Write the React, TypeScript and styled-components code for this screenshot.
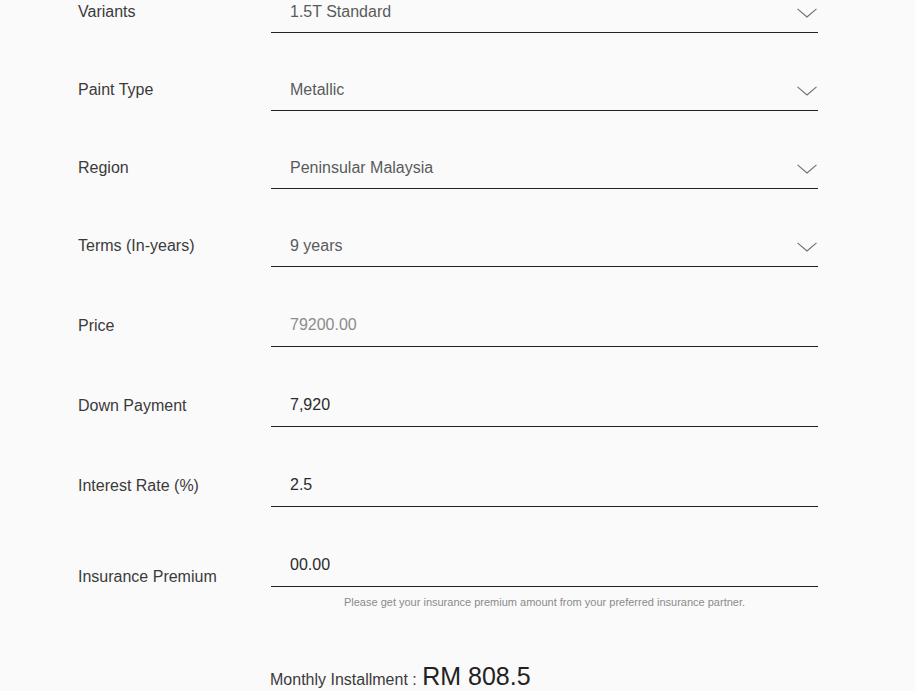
import React from "react";
import styled, { createGlobalStyle } from "styled-components";

const GlobalStyle = createGlobalStyle`
  html, body {
    margin: 0;
    padding: 0;
    background: #fafafa;
    font-family: "Liberation Sans", Arial, Helvetica, sans-serif;
    overflow: hidden;
  }
`;

const selects = [
  { label: "Variants", value: "1.5T Standard" },
  { label: "Paint Type", value: "Metallic" },
  { label: "Region", value: "Peninsular Malaysia" },
  { label: "Terms (In-years)", value: "9 years" },
];

const inputs = [
  { label: "Price", value: "79200.00", disabled: true },
  { label: "Down Payment", value: "7,920" },
  { label: "Interest Rate (%)", value: "2.5" },
];

function Chevron() {
  return (
    <ChevronSvg width="20" height="10" viewBox="0 0 20 10">
      <polyline
        points="0.5,0.8 10,9 19.5,0.8"
        fill="none"
        stroke="#6f6f6f"
        strokeWidth="1.1"
      />
    </ChevronSvg>
  );
}

function App() {
  return (
    <>
      <GlobalStyle />
      <Page>
        <Group $gap={35}>
          {selects.map((s) => (
            <Row key={s.label}>
              <Label>{s.label}</Label>
              <Field>
                <SelectValue>{s.value}</SelectValue>
                <Chevron />
              </Field>
            </Row>
          ))}
        </Group>
        <Group $gap={37}>
          {inputs.map((i) => (
            <Row key={i.label}>
              <Label>{i.label}</Label>
              <Field>
                <TextInput
                  defaultValue={i.value}
                  readOnly
                  $muted={!!i.disabled}
                />
              </Field>
            </Row>
          ))}
          <Row>
            <Label>Insurance Premium</Label>
            <FieldWithHint>
              <Field>
                <TextInput defaultValue="00.00" readOnly $muted={false} />
              </Field>
              <Hint>
                Please get your insurance premium amount from your preferred
                insurance partner.
              </Hint>
            </FieldWithHint>
          </Row>
        </Group>
        <Result>
          <ResultLabel>Monthly Installment : </ResultLabel>
          <ResultValue>RM 808.5</ResultValue>
        </Result>
      </Page>
    </>
  );
}

const Page = styled.div`
  width: 740px;
  padding-left: 78px;
  margin-top: -10px;
  display: flex;
  flex-direction: column;
  gap: 37px;
`;

const Group = styled.div<{ $gap: number }>`
  display: flex;
  flex-direction: column;
  gap: ${(p) => p.$gap}px;
`;

const Row = styled.div`
  display: grid;
  grid-template-columns: 193px 547px;
  align-items: center;
`;

const Label = styled.div`
  font-size: 16px;
  color: #3a3a3a;
  line-height: 20px;
`;

const Field = styled.div`
  position: relative;
  border-bottom: 1px solid #222;
  display: flex;
  align-items: center;
  padding: 1px 1px 0 19px;
  box-sizing: border-box;
  height: 43px;
`;

const FieldWithHint = styled.div`
  display: flex;
  flex-direction: column;
`;

const SelectValue = styled.div`
  flex: 1;
  font-size: 16px;
  color: #5a5a5a;
  line-height: 20px;
`;

const ChevronSvg = styled.svg`
  display: block;
  margin-top: 3px;
`;

const TextInput = styled.input<{ $muted: boolean }>`
  flex: 1;
  border: none;
  outline: none;
  background: transparent;
  padding: 0;
  margin-top: -2px;
  font-family: "Liberation Sans", Arial, Helvetica, sans-serif;
  font-size: 16px;
  line-height: 20px;
  color: ${(p) => (p.$muted ? "#8c8c8c" : "#2a2a2a")};
`;

const Hint = styled.div`
  margin-top: 8px;
  text-align: center;
  font-size: 11px;
  line-height: 14px;
  color: #8a8a8a;
`;

const Result = styled.div`
  margin-top: 16px;
  padding-left: 192px;
  display: flex;
  align-items: baseline;
  color: #3a3a3a;
`;

const ResultLabel = styled.span`
  font-size: 16px;
  white-space: pre;
`;

const ResultValue = styled.span`
  font-size: 25px;
  color: #222;
  margin-left: 1px;
`;

export default App;
